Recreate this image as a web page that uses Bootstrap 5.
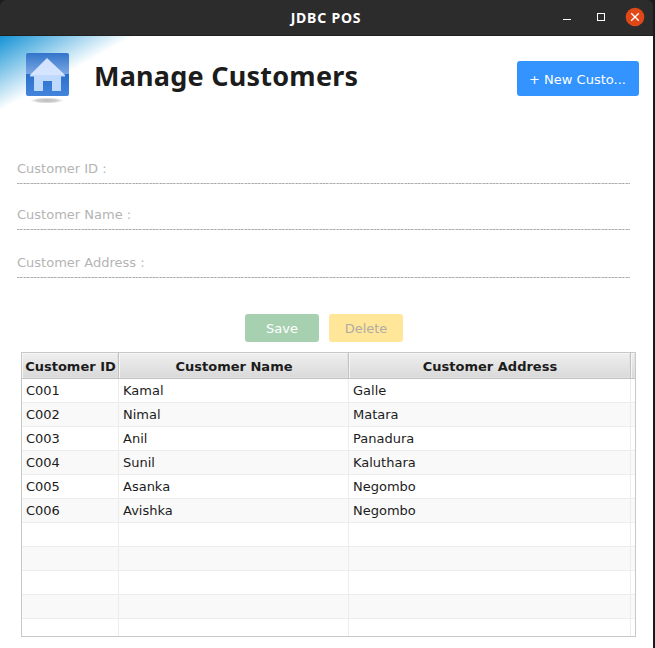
<!DOCTYPE html>
<html lang="en">
<head>
<meta charset="utf-8">
<meta name="viewport" content="width=device-width, initial-scale=1">
<title>JDBC POS</title>
<link rel="stylesheet" href="https://cdn.jsdelivr.net/npm/bootstrap@5.3.0/dist/css/bootstrap.min.css">
<style>
body{font:13px/18px "DejaVu Sans",sans-serif;color:#1c1c1c;background:#1a1c1c;overflow:hidden}
.pos-window{width:653px;height:648px;background:linear-gradient(#1a1c1c 0 30px,#fff 30px)}
.titlebar{height:36px;background:#2c2c2c;border-bottom:1px solid #202020;display:grid;grid-template-columns:1fr auto 1fr;color:#fff;border-radius:6px 6px 0 0}
.titlebar h1{font:700 14px/18px "Noto Sans",sans-serif;margin:0;letter-spacing:.8px;position:relative;left:-.5px}
.page-head{height:112px;background:linear-gradient(to bottom right,#1593d6 0%,#fff 50%) 0 0/134px 75px no-repeat}
.page-title{font:700 27px/36px "Noto Sans",sans-serif;letter-spacing:.23px;margin:22px 0 0 24px;white-space:nowrap}
.home-icon{margin:16px 0 0 25px}
.btn-new{width:122px;height:35px;margin:25px 14px 0 0;background:#3394ff;color:#fff;border-radius:3px;font-size:13px;line-height:18px;padding:2px 1px 0 0;border:0}
.field-line{width:613px;margin-left:17px;color:#b4b4b4;height:24px;background:repeating-linear-gradient(90deg,#adadad 0 2px,#d6d6d6 2px 3.4px) 0 100%/100% 1px no-repeat}
.customer-id{margin-top:12px}
.name-line{margin-top:22px}
.address-line{margin-top:24px}
.actions{margin:36px 0 10px 245px;gap:10px}
.btn-act{width:74px;height:28px;border:0;border-radius:3px;font-size:13px;line-height:18px;padding:1px 0 0}
.btn-act.save{background:#a6d0b0;color:#fff}
.btn-act.del{background:#ffe699;color:#b0aca4}
.grid-box{width:615px;height:285px;margin-left:21px;border:1px solid #c8c8c8;overflow:hidden}
.grid-box table{table-layout:fixed;width:613px;border-collapse:separate;border-spacing:0}
.grid-box th{height:26px;padding:2px 0 0 1px;text-align:center;line-height:18px;white-space:nowrap;background:linear-gradient(#efefef,#d9d9d9);border-right:1px solid #c1c1c1;border-bottom:1px solid #c1c1c1;box-shadow:inset 1px 1px 0 #f5f5f5,inset -1px -1px 0 #e2e2e2}
.grid-box td{height:24px;padding:0 4px;line-height:18px;border-right:1px solid #ededed;border-bottom:1px solid #ededed}
.grid-box tbody tr:nth-child(even) td{background:#f9f9f9}
.grid-box tr>:last-child{border-right:0}
</style>
</head>
<body>
<div class="pos-window d-flex flex-column">
  <header class="titlebar align-items-center flex-shrink-0">
    <span></span><h1>JDBC POS</h1>
    <svg class="ms-auto mb-auto" width="100" height="34" viewBox="553 0 100 34">
      <path d="M563 19.500h8" stroke="#fff"/>
      <rect x="597.5" y="13.5" width="7" height="7" fill="none" stroke="#fff"/>
      <circle cx="635" cy="17" r="9.3" fill="#e14817"/>
      <path d="M631.2 13.200l7.600 7.600m0-7.600l-7.600 7.600" stroke="#fff" stroke-width="1.3"/>
    </svg>
  </header>
  <div class="page-head d-flex align-items-start flex-shrink-0">
    <svg class="home-icon flex-shrink-0" width="45" height="54" viewBox="0 0 45 54">
      <defs>
        <linearGradient id="tile" x2="0" y2="1"><stop stop-color="#3375cb"/><stop offset=".49" stop-color="#7ba7e3"/><stop offset=".5" stop-color="#2a70cc"/><stop offset="1" stop-color="#4385dc"/></linearGradient>
        <linearGradient id="house" x2="0" y2="1"><stop stop-color="#cfe0ff"/><stop offset=".5" stop-color="#d6e5ff"/><stop offset=".51" stop-color="#c1dafd"/><stop offset="1" stop-color="#bdd8ff"/></linearGradient>
        <radialGradient id="shade"><stop stop-color="#aaa" stop-opacity=".8"/><stop offset=".6" stop-color="#aaa" stop-opacity=".55"/><stop offset="1" stop-color="#bbb" stop-opacity="0"/></radialGradient>
      </defs>
      <ellipse cx="22" cy="48.5" rx="17" ry="3" fill="url(#shade)"/>
      <rect x="1" y="1" width="43" height="43" rx="2" fill="url(#tile)"/>
      <path d="M22 6L40 23v1.500H36V39H27V29H18v10H9V24.500H5V23z" fill="url(#house)"/>
    </svg>
    <h2 class="page-title">Manage Customers</h2>
    <button class="btn btn-new ms-auto">+ New Custo...</button>
  </div>
  <form class="flex-shrink-0 d-flex flex-column">
    <div class="field-line customer-id">Customer ID :</div>
    <div class="field-line name-line">Customer Name :</div>
    <div class="field-line address-line">Customer Address :</div>
  </form>
  <div class="d-flex actions flex-shrink-0">
    <button class="btn btn-act save">Save</button>
    <button class="btn btn-act del">Delete</button>
  </div>
  <div class="grid-box flex-shrink-0">
    <table>
      <colgroup><col width="97"><col width="230"><col width="282"><col width="4"></colgroup>
      <thead><tr><th>Customer ID</th><th>Customer Name</th><th>Customer Address</th><th></th></tr></thead>
      <tbody>
        <tr><td>C001</td><td>Kamal</td><td>Galle</td><td class="px-0"></td></tr>
        <tr><td>C002</td><td>Nimal</td><td>Matara</td><td class="px-0"></td></tr>
        <tr><td>C003</td><td>Anil</td><td>Panadura</td><td class="px-0"></td></tr>
        <tr><td>C004</td><td>Sunil</td><td>Kaluthara</td><td class="px-0"></td></tr>
        <tr><td>C005</td><td>Asanka</td><td>Negombo</td><td class="px-0"></td></tr>
        <tr><td>C006</td><td>Avishka</td><td>Negombo</td><td class="px-0"></td></tr>
        <tr><td></td><td></td><td></td><td class="px-0"></td></tr>
        <tr><td></td><td></td><td></td><td class="px-0"></td></tr>
        <tr><td></td><td></td><td></td><td class="px-0"></td></tr>
        <tr><td></td><td></td><td></td><td class="px-0"></td></tr>
        <tr><td></td><td></td><td></td><td class="px-0"></td></tr>
      </tbody>
    </table>
  </div>
</div>
<script src="https://cdn.jsdelivr.net/npm/bootstrap@5.3.0/dist/js/bootstrap.bundle.min.js"></script>
</body>
</html>
